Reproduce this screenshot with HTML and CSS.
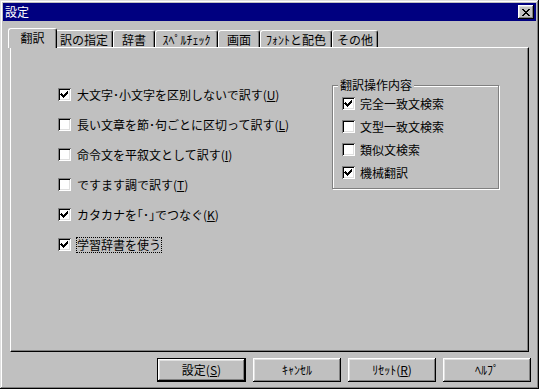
FILE: index.html
```html
<!DOCTYPE html>
<html lang="ja">
<head>
  <meta charset="UTF-8" />
  <title>設定</title>
  <link rel="stylesheet" href="styles.css">
</head>
<body>
  <div class="window">
    <div class="titlebar">
      <span class="title">設定</span>
      <button class="close">
        <svg width="8" height="7" viewBox="0 0 8 7" shape-rendering="crispEdges">
          <path d="M0 0h2v1h1v1h2v-1h1v-1h2v1h-1v1h-1v1h-1v1h1v1h1v1h1v1h-2v-1h-1v-1h-2v1h-1v1h-2v-1h1v-1h1v-1h1v-1h-1v-1h-1v-1h-1z" fill="#000"/>
        </svg>
      </button>
    </div>

    <div class="tabs">
      <div class="tab active" style="width:49px">翻訳</div>
      <div class="tab" style="width:58px">訳の指定</div>
      <div class="tab" style="width:42px">辞書</div>
      <div class="tab" style="width:63px">ｽﾍﾟﾙﾁｪｯｸ</div>
      <div class="tab" style="width:42px">画面</div>
      <div class="tab" style="width:72px">ﾌｫﾝﾄと配色</div>
      <div class="tab" style="width:46px">その他</div>
    </div>

    <div class="panel">
      <div class="options">
        <label class="check"><span class="box checked"></span><span>大文字･小文字を区別しないで訳す(<u>U</u>)</span></label>
        <label class="check"><span class="box"></span><span>長い文章を節･句ごとに区切って訳す(<u>L</u>)</span></label>
        <label class="check"><span class="box"></span><span>命令文を平叙文として訳す(<u>I</u>)</span></label>
        <label class="check"><span class="box"></span><span>ですます調で訳す(<u>T</u>)</span></label>
        <label class="check"><span class="box checked"></span><span>カタカナを｢･｣でつなぐ(<u>K</u>)</span></label>
        <label class="check"><span class="box checked"></span><span class="focus">学習辞書を使う</span></label>
      </div>

      <fieldset class="group">
        <legend>翻訳操作内容</legend>
        <label class="check"><span class="box checked"></span><span>完全一致文検索</span></label>
        <label class="check"><span class="box"></span><span>文型一致文検索</span></label>
        <label class="check"><span class="box"></span><span>類似文検索</span></label>
        <label class="check"><span class="box checked"></span><span>機械翻訳</span></label>
      </fieldset>
    </div>

    <div class="buttons">
      <button class="btn default">設定(<u>S</u>)</button>
      <button class="btn">ｷｬﾝｾﾙ</button>
      <button class="btn">ﾘｾｯﾄ(<u>R</u>)</button>
      <button class="btn">ﾍﾙﾌﾟ</button>
    </div>
  </div>
</body>
</html>
```

FILE: styles.css
```css
body {
  margin: 0;
  background: #c0c0c0;
  font-family: "Noto Sans CJK JP", sans-serif;
  font-size: 12px;
  line-height: 14px;
  color: #000;
}

.window {
  width: 539px;
  height: 389px;
  box-sizing: border-box;
  padding: 3px;
  background: #c0c0c0;
  box-shadow: inset -1px -1px #000, inset 1px 1px #dfdfdf,
              inset -2px -2px #808080, inset 2px 2px #fff;
  display: flex;
  flex-direction: column;
}

.titlebar {
  height: 18px;
  background: #000080;
  color: #fff;
  display: flex;
  align-items: center;
  justify-content: space-between;
  padding: 0 2px;
}

.close {
  width: 16px;
  height: 14px;
  padding: 0;
  border: none;
  background: #c0c0c0;
  box-shadow: inset -1px -1px #000, inset 1px 1px #fff,
              inset -2px -2px #808080, inset 2px 2px #dfdfdf;
  display: flex;
  align-items: center;
  justify-content: center;
}

.tabs {
  display: flex;
  align-items: flex-end;
  height: 19px;
  margin: 7px 0 0 7px;
}

.tab {
  height: 17px;
  box-sizing: border-box;
  border: 1px solid #fff;
  border-right-color: #000;
  border-bottom: none;
  border-radius: 3px 3px 0 0;
  box-shadow: inset -1px 0 #808080;
  display: flex;
  align-items: center;
  justify-content: center;
  padding-top: 1px;
}

.tab.active {
  position: relative;
  z-index: 1;
  height: 20px;
  margin: 0 -2px -1px;
  background: #c0c0c0;
  padding-top: 0;
  padding-bottom: 2px;
}

.panel {
  height: 305px;
  box-sizing: border-box;
  margin: 0 7px;
  border: 1px solid #fff;
  border-right-color: #000;
  border-bottom-color: #000;
  box-shadow: inset -1px -1px #808080;
  display: flex;
  align-items: flex-start;
}

.options {
  flex: none;
  width: 274px;
  padding: 40px 0 0 47px;
  display: flex;
  flex-direction: column;
  gap: 17px;
}

.check {
  display: flex;
  align-items: center;
  gap: 6px;
  height: 13px;
  white-space: nowrap;
}

.box {
  flex: none;
  width: 13px;
  height: 13px;
  background: #fff;
  box-shadow: inset 1px 1px #808080, inset -1px -1px #fff,
              inset 2px 2px #000, inset -2px -2px #dfdfdf;
}

.box.checked {
  background: #fff url("data:image/svg+xml,%3Csvg xmlns='http://www.w3.org/2000/svg' width='13' height='13' shape-rendering='crispEdges'%3E%3Cpath d='M3 5h1v1h1v1h1v-1h1v-1h1v-1h1v-1h1v3h-1v1h-1v1h-1v1h-1v1h-1v-1h-1v-1h-1v-1h-1z' fill='%23000'/%3E%3C/svg%3E") no-repeat;
}

.focus {
  outline: 1px dotted #000;
  outline-offset: 0;
}

.group {
  flex: none;
  width: 167px;
  box-sizing: border-box;
  margin: 30px 0 0 0;
  padding: 5px 9px 9px;
  border: 1px solid #808080;
  box-shadow: inset 1px 1px #fff, 1px 1px #fff;
  display: flex;
  flex-direction: column;
  gap: 10px;
}

.group legend {
  padding: 0 2px;
  margin-left: -4px;
  background: #c0c0c0;
}

.group .check {
  gap: 5px;
}

.buttons {
  display: flex;
  justify-content: flex-end;
  gap: 7px;
  margin: 6px 5px 0 0;
}

.btn {
  width: 88px;
  height: 24px;
  box-sizing: border-box;
  padding: 0;
  border: none;
  background: #c0c0c0;
  font: inherit;
  color: #000;
  box-shadow: inset -1px -1px #000, inset 1px 1px #fff,
              inset -2px -2px #808080, inset 2px 2px #dfdfdf;
}

.btn.default {
  width: 89px;
  border: 1px solid #000;
}
```
